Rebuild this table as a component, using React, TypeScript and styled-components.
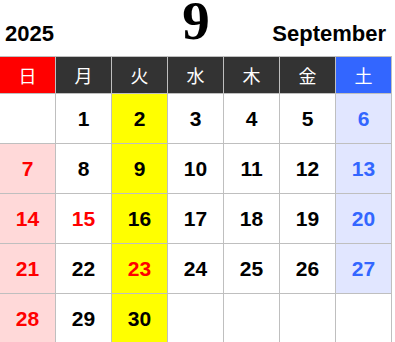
import React from 'react'
import styled, { createGlobalStyle } from 'styled-components'

const GlobalStyle = createGlobalStyle`
    html, body {
        margin: 0;
        padding: 0;
        background: #fff;
    }
    body {
        font-family: "Liberation Sans", Arial, sans-serif;
    }
`

type Kind = 'sun' | 'sat' | 'tue' | 'plain' | 'empty'

interface Day {
    num: number | null
    holiday?: boolean
}

const HOLIDAYS = [15, 23]
const WEEKDAYS = ['日', '月', '火', '水', '木', '金', '土']

function buildWeeks(): Day[][] {
    // September 2025 starts on a Monday
    const cells: Day[] = [{ num: null }]
    for (let d = 1; d <= 30; d++) cells.push({ num: d, holiday: HOLIDAYS.includes(d) })
    while (cells.length % 7) cells.push({ num: null })
    const weeks: Day[][] = []
    for (let i = 0; i < cells.length; i += 7) weeks.push(cells.slice(i, i + 7))
    return weeks
}

function kindOf(col: number, day: Day): Kind {
    if (day.num === null) return col === 2 ? 'tue' : 'empty'
    if (col === 0) return 'sun'
    if (col === 6) return 'sat'
    if (col === 2) return 'tue'
    return 'plain'
}

const cellBg: Record<Kind, string> = {
    sun: '#ffd9d9',
    sat: '#e1e6ff',
    tue: '#ffff00',
    plain: '#ffffff',
    empty: '#ffffff',
}

export default function App(): JSX.Element {
    const weeks = buildWeeks()

    return (
        <Page>
            <GlobalStyle />
            <TopBar>
                <Year>2025</Year>
                <Month>9</Month>
                <MonthName>September</MonthName>
            </TopBar>
            <Grid>
                {WEEKDAYS.map((w, i) => (
                    <HeadCell key={w} $tone={i === 0 ? 'sun' : i === 6 ? 'sat' : 'plain'}>
                        {w}
                    </HeadCell>
                ))}
                {weeks.map((week, r) =>
                    week.map((day, c) => {
                        const kind = kindOf(c, day)
                        const color = c === 0 || day.holiday ? '#ff0000' : c === 6 ? '#3366ff' : '#000000'
                        return (
                            <DayCell key={`${r}-${c}`} $bg={cellBg[kind]} $color={color}>
                                {day.num}
                            </DayCell>
                        )
                    })
                )}
            </Grid>
        </Page>
    )
}

const Page = styled.div`
    width: 395px;
    height: 342px;
    overflow: hidden;
    background: #fff;
`

const TopBar = styled.div`
    display: grid;
    grid-template-columns: 1fr auto 1fr;
    grid-template-rows: 56px;
    align-items: end;
    height: 56px;
    width: 392px;
`

const Year = styled.div`
    font-family: "Liberation Sans", Arial, sans-serif;
    font-weight: 700;
    font-size: 22px;
    line-height: 22px;
    padding: 0 0 11px 5px;
    color: #000;
`

const Month = styled.div`
    font-family: "Liberation Serif", "Times New Roman", serif;
    font-weight: 700;
    font-size: 55px;
    line-height: 42px;
    padding-bottom: 14px;
    color: #000;
`

const MonthName = styled.div`
    justify-self: end;
    font-family: "Liberation Sans", Arial, sans-serif;
    font-weight: 700;
    font-size: 22px;
    line-height: 22px;
    padding: 0 6px 11px 0;
    color: #000;
`

const Grid = styled.div`
    display: grid;
    grid-template-columns: repeat(7, 55px);
    grid-template-rows: 36px repeat(5, 49px);
    gap: 1px;
    padding: 1px 1px 0 0;
    width: 391px;
    background: #bfbfbf;
`

const headBg = {
    sun: '#ff0000',
    sat: '#3366ff',
    plain: '#333333',
}

const HeadCell = styled.div<{ $tone: 'sun' | 'sat' | 'plain' }>`
    display: flex;
    align-items: center;
    justify-content: center;
    background: ${(p) => headBg[p.$tone]};
    color: #fff;
    font-family: "Noto Sans CJK JP", sans-serif;
    font-size: 18px;
    font-weight: 400;
`

const DayCell = styled.div<{ $bg: string; $color: string }>`
    display: flex;
    align-items: center;
    justify-content: center;
    background: ${(p) => p.$bg};
    color: ${(p) => p.$color};
    font-family: "Liberation Sans", Arial, sans-serif;
    font-weight: 700;
    font-size: 21px;
`
